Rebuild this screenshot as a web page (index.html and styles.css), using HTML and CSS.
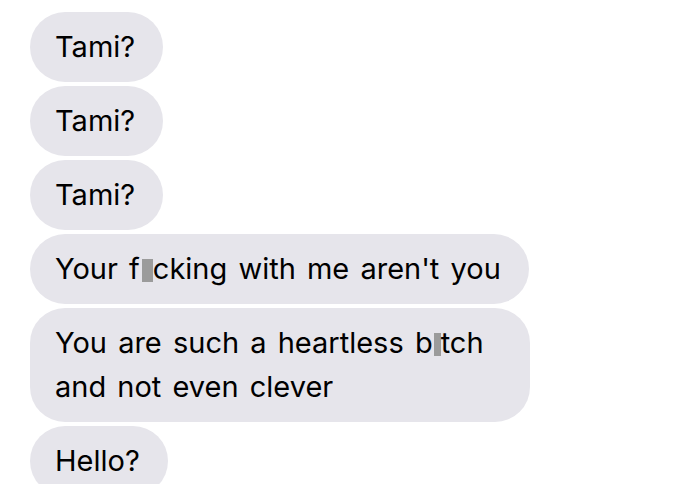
FILE: index.html
```html
<!DOCTYPE html>
<html lang="en">
<head>
    <meta charset="UTF-8">
    <meta name="viewport" content="width=device-width, initial-scale=1.0">
    <title>Messages</title>
    <link rel="stylesheet" href="styles.css">
</head>
<body>
    <div class="thread">
        <div class="bubble">Tami?</div>
        <div class="bubble">Tami?</div>
        <div class="bubble">Tami?</div>
        <div class="bubble">Your f<span class="censor"></span>cking with me aren't you</div>
        <div class="bubble">You are such a heartless b<span class="censor narrow"></span>tch and not even clever</div>
        <div class="bubble">Hello?</div>
    </div>
</body>
</html>
```

FILE: styles.css
```css
body { margin: 0; background: #fff; font-family: Inter, "Liberation Sans", Arial, sans-serif; color: #000; overflow: hidden; }
.thread { display: flex; flex-direction: column; align-items: flex-start; gap: 4px; padding: 12px 0 0 30px; }
.bubble { background: #e6e5eb; border-radius: 35px; padding: 13px 28px 13px 25px; font-size: 29px; line-height: 44px; word-spacing: 3px; max-width: 447px; }
.censor { display: inline-block; width: 11px; height: 23px; background: #9b9b9b; vertical-align: -3px; margin-left: 2px; }
.censor.narrow { width: 7px; margin-left: 1px; }
```
